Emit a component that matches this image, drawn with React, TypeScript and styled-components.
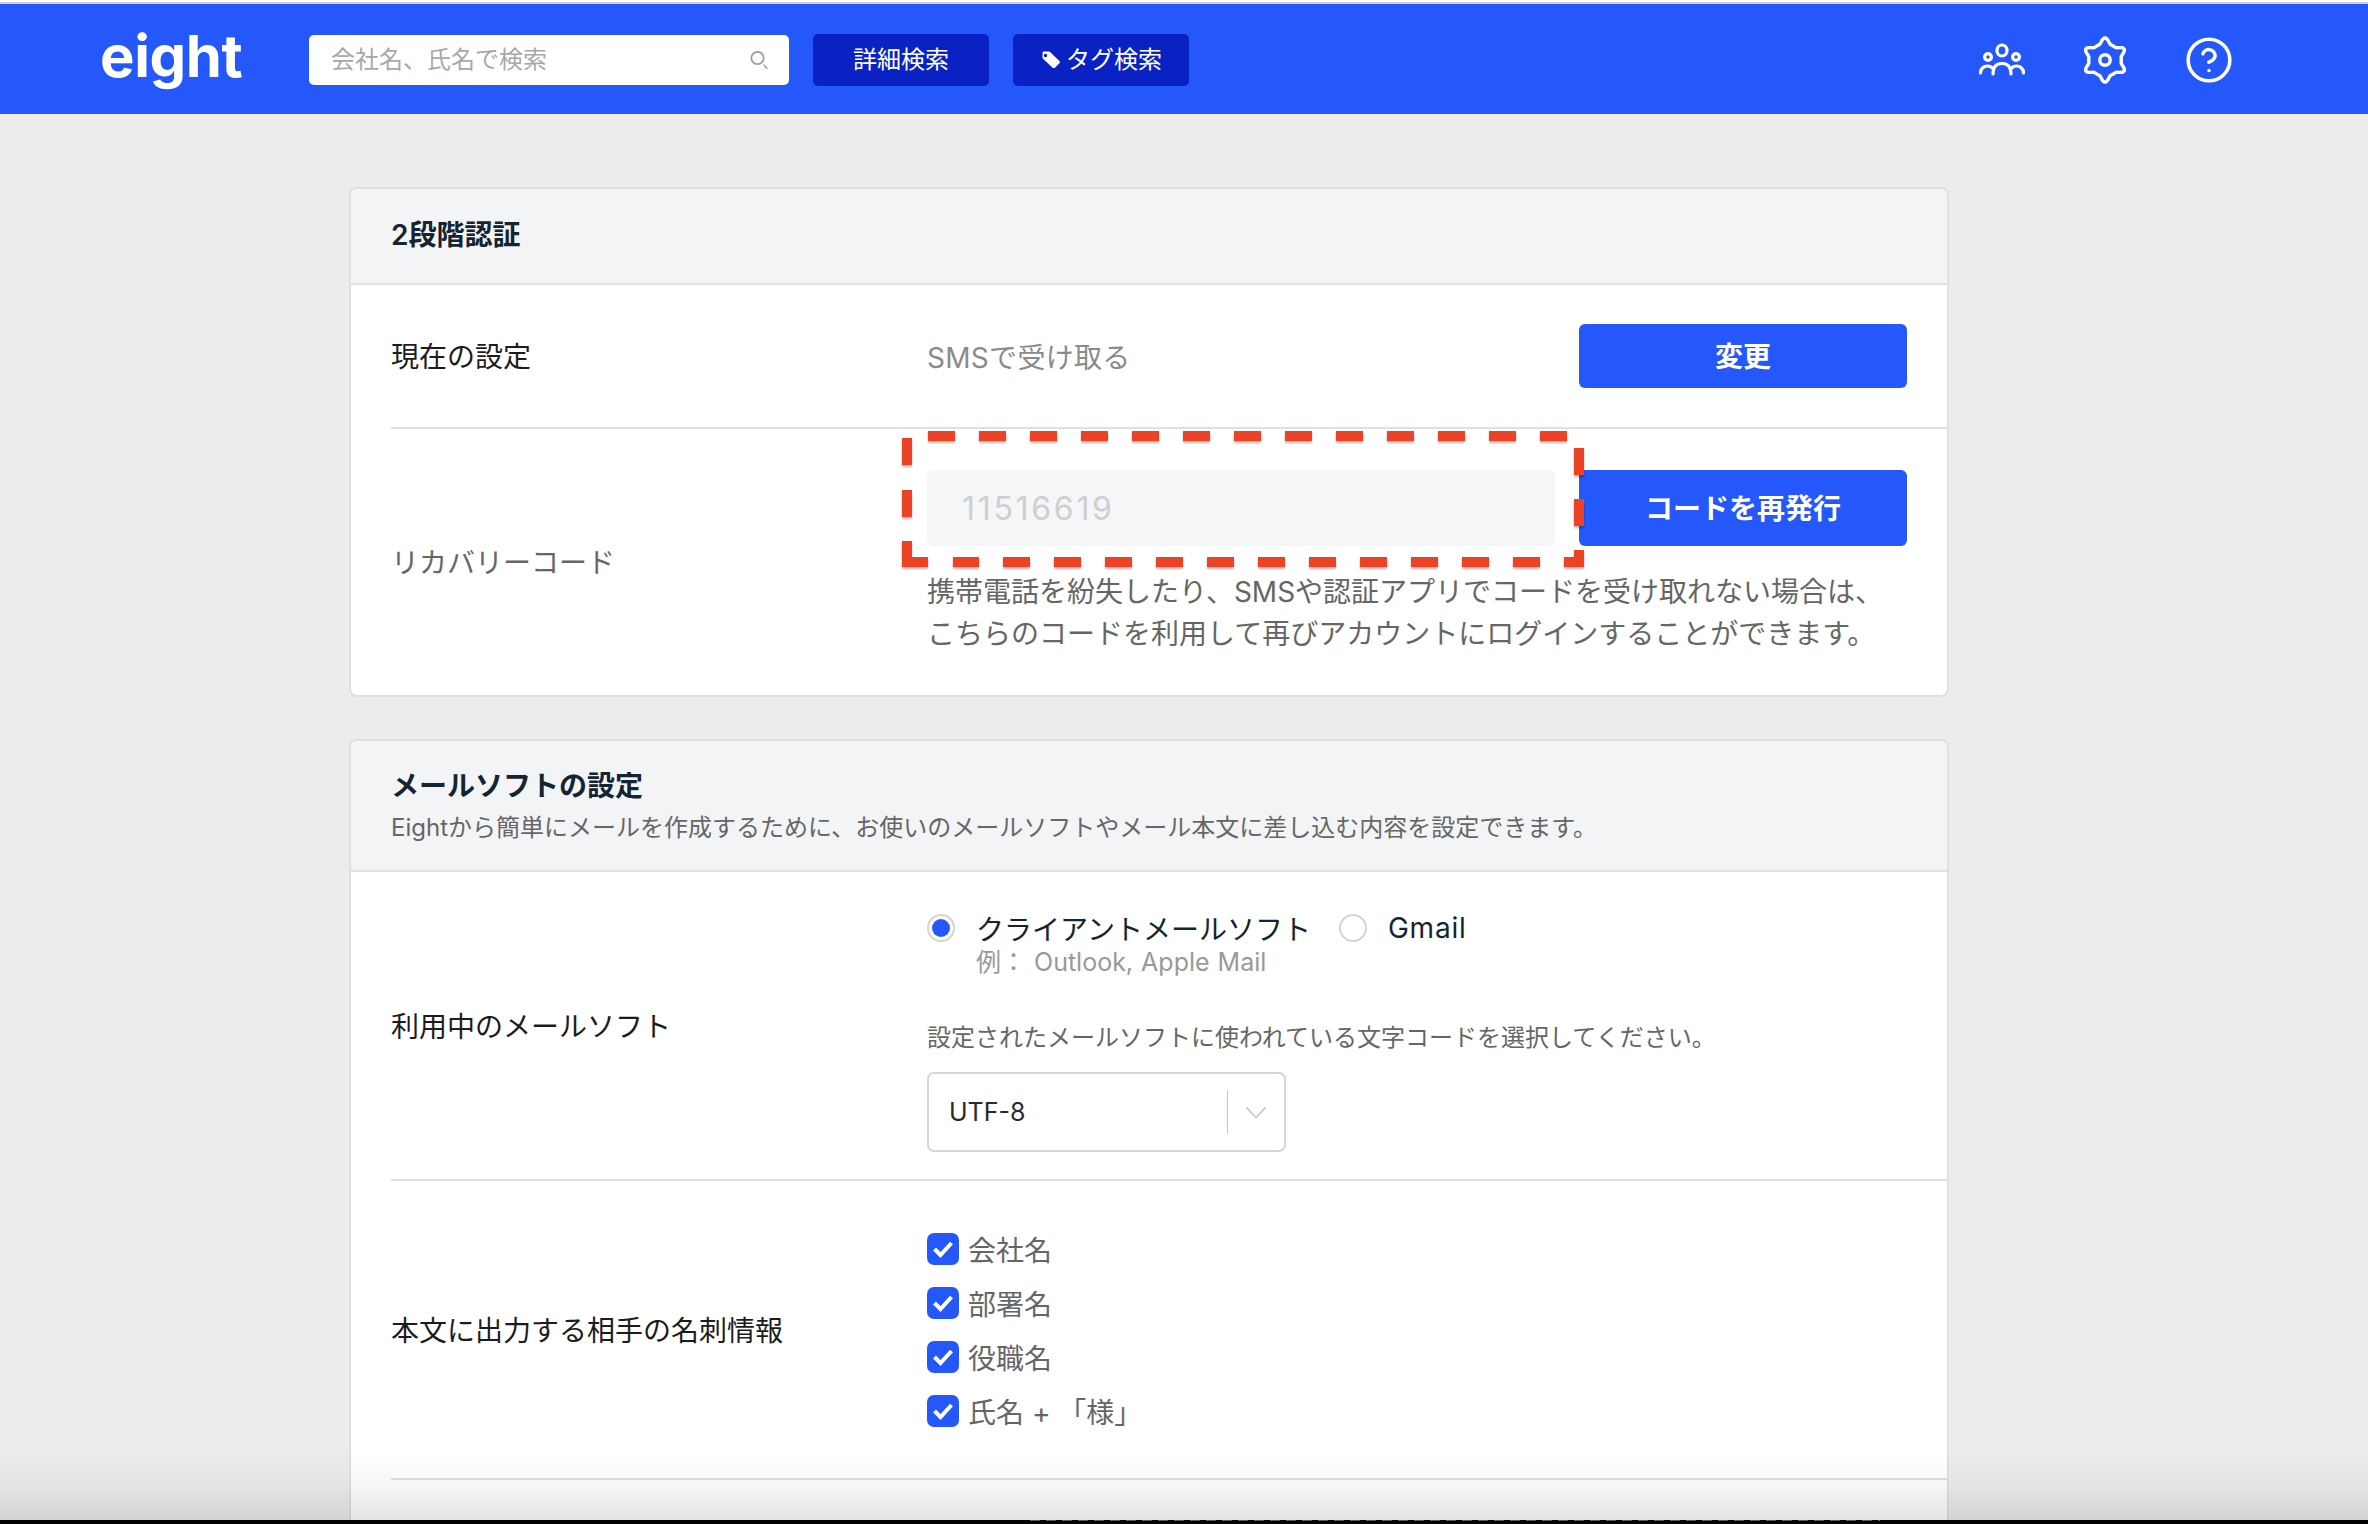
import React from 'react';
import styled, { createGlobalStyle } from 'styled-components';
import { CircleHelp } from 'lucide-react';

const blue = '#2458fa';
const navy = '#0a22c4';
const line = '#e0e0e0';
const sans = `Inter, 'Noto Sans CJK JP', sans-serif`;

const GlobalStyle = createGlobalStyle`
  html, body {
    margin: 0;
    padding: 0;
    background: #ececec;
  }
  * {
    box-sizing: border-box;
  }
`;

const Page = styled.div`
  position: relative;
  height: 1524px;
  overflow: hidden;
  background: #ececec;
  font-family: ${sans};
  border-top: 2px solid #fff;
`;

const TopBar = styled.header`
  display: flex;
  align-items: center;
  height: 112px;
  padding: 2px 134px 0 100px;
  background: ${blue};
  border-top: 2px solid #d0d0d0;
`;

const Logo = styled.div`
  width: 209px;
  font-size: 58px;
  font-weight: 700;
  line-height: 1;
  letter-spacing: -0.4px;
  color: #fff;
  margin-top: -9px;
`;

const SearchBox = styled.div`
  display: flex;
  align-items: center;
  justify-content: space-between;
  width: 480px;
  height: 50px;
  padding: 0 20px 5px 22px;
  background: #fff;
  border-radius: 5px;
  font-size: 24px;
  color: #a8a8a8;
`;

const NavButton = styled.div`
  display: flex;
  align-items: center;
  justify-content: center;
  gap: 4px;
  width: 176px;
  height: 52px;
  margin-left: 24px;
  padding-bottom: 5px;
  background: ${navy};
  border-radius: 5px;
  font-size: 24px;
  color: #fff;
`;

const NavIcons = styled.div`
  display: flex;
  align-items: center;
  gap: 55px;
  margin-left: auto;
`;

const Main = styled.main`
  display: flex;
  flex-direction: column;
  gap: 42px;
  width: 1600px;
  margin-left: 349px;
  padding-top: 73px;
`;

const Card = styled.section`
  position: relative;
  background: #fff;
  border: 2px solid ${line};
  border-radius: 8px;
`;

const CardHead = styled.div<{ $height: number }>`
  display: flex;
  flex-direction: column;
  justify-content: center;
  height: ${(p) => p.$height}px;
  padding-left: 40px;
  padding-bottom: 2px;
  background: #f3f4f6;
  border-bottom: 2px solid ${line};
  border-radius: 6px 6px 0 0;
`;

const CardTitle = styled.h2`
  margin: 0;
  font-size: 28px;
  font-weight: 600;
  line-height: 40px;
  color: #152433;
`;

const CardSub = styled.p`
  margin: 2px 0 -4px;
  font-size: 24px;
  line-height: 40px;
  color: #666;
`;

const Row = styled.div<{ $last?: boolean }>`
  display: grid;
  grid-template-columns: 536px 1fr;
  align-items: center;
  margin-left: 40px;
  padding-right: 40px;
  border-bottom: ${(p) => (p.$last ? 'none' : `2px solid ${line}`)};
`;

const RowLabel = styled.div<{ $muted?: boolean }>`
  padding-top: 2px;
  font-size: 28px;
  line-height: 40px;
  color: ${(p) => (p.$muted ? '#666' : '#1c1c1c')};
`;

const SettingValue = styled.div`
  display: flex;
  align-items: center;
  justify-content: space-between;
  height: 142px;
  font-size: 28px;
  letter-spacing: 0.3px;
  color: #8a8a8a;
`;

const PrimaryButton = styled.div<{ $height: number }>`
  display: flex;
  align-items: center;
  justify-content: center;
  flex: none;
  width: 328px;
  height: ${(p) => p.$height}px;
  padding-bottom: 2px;
  background: ${blue};
  border-radius: 6px;
  font-size: 28px;
  font-weight: 600;
  letter-spacing: 0;
  color: #fff;
`;

const RecoveryCell = styled.div`
  padding: 41px 0 40px;
`;

const CodeRow = styled.div`
  display: flex;
  gap: 24px;
`;

const CodeField = styled.div`
  display: flex;
  align-items: center;
  flex: 1;
  height: 76px;
  padding-left: 35px;
  background: #f5f6f8;
  border-radius: 6px;
  font-size: 32px;
  letter-spacing: 2.7px;
  color: #cfcfcf;
`;

const Hint = styled.p`
  margin: 25px 0 0;
  font-size: 28px;
  line-height: 42px;
  color: #666;
`;

const DashedMark = styled.svg`
  position: absolute;
  left: 0;
  top: 0;
  width: 1600px;
  height: 520px;
  overflow: visible;
  pointer-events: none;
  filter: drop-shadow(0 2px 1px rgba(0, 0, 0, 0.3));
`;

const MailCell = styled.div`
  padding: 42px 0 27px;
`;

const RadioRow = styled.div`
  display: flex;
  align-items: center;
  height: 28px;
  font-size: 28px;
  color: #152433;
`;

const Radio = styled.span<{ $on?: boolean }>`
  display: flex;
  align-items: center;
  justify-content: center;
  width: 28px;
  height: 28px;
  margin-right: 21px;
  background: #fff;
  border: 2px solid #d4d4d4;
  border-radius: 50%;
  &::after {
    content: '';
    display: ${(p) => (p.$on ? 'block' : 'none')};
    width: 18px;
    height: 18px;
    background: ${blue};
    border-radius: 50%;
  }
`;

const RadioLabel = styled.span<{ $latin?: boolean }>`
  margin-right: 28px;
  white-space: nowrap;
  letter-spacing: ${(p) => (p.$latin ? '0.8px' : '0')};
`;

const RadioNote = styled.div`
  margin: 3px 0 0 49px;
  font-size: 25px;
  line-height: 34px;
  word-spacing: 1px;
  color: #999;
`;

const Note = styled.p`
  margin: 41px 0 16px;
  font-size: 24px;
  line-height: 36px;
  color: #666;
`;

const SelectBox = styled.div`
  display: flex;
  align-items: center;
  width: 359px;
  height: 80px;
  padding-left: 20px;
  border: 2px solid #d6d6d6;
  border-radius: 7px;
  font-size: 25px;
  color: #2a2a2a;
`;

const SelectValue = styled.span`
  flex: 1;
`;

const SelectArrow = styled.span`
  display: flex;
  align-items: center;
  justify-content: center;
  width: 57px;
  height: 44px;
  border-left: 1px solid #c8c8c8;
`;

const CheckList = styled.div`
  display: flex;
  flex-direction: column;
  gap: 22px;
  padding: 52px 0 51px;
`;

const CheckItem = styled.div`
  display: flex;
  align-items: center;
  gap: 9px;
  height: 32px;
  font-size: 28px;
  color: #666;
`;

const CheckBox = styled.span`
  display: flex;
  align-items: center;
  justify-content: center;
  width: 32px;
  height: 32px;
  background: ${blue};
  border-radius: 7px;
`;

const BottomShade = styled.div`
  position: absolute;
  left: 0;
  right: 0;
  bottom: 4px;
  height: 70px;
  background: linear-gradient(to bottom, rgba(0, 0, 0, 0), rgba(0, 0, 0, 0.03) 50%, rgba(0, 0, 0, 0.11));
`;

const DockEdge = styled.div`
  position: absolute;
  left: 0;
  right: 0;
  bottom: 0;
  height: 4px;
  background: #000;
  &::after {
    content: '';
    position: absolute;
    left: 1030px;
    width: 850px;
    top: 0;
    height: 1px;
    background: repeating-linear-gradient(to right, #555 0 10px, transparent 10px 16px);
  }
`;

const SearchGlyph = () => (
  <svg width="20" height="20" viewBox="0 0 20 20" fill="none" stroke="#9a9a9a" style={{ marginTop: 5 }}>
    <circle cx="8.500" cy="8" r="6.200" strokeWidth="1.700" />
    <path d="M15 15l3 3.500" strokeWidth="1.300" strokeLinecap="round" />
  </svg>
);

const TagGlyph = () => (
  <svg width="22" height="20" viewBox="0 0 20 18" style={{ marginTop: 5 }}>
    <path
      fill="#fff"
      fillRule="evenodd"
      d="M1.500 1.200h6.200c.6 0 1.100.2 1.500.6l8.400 8c.6.6.6 1.500 0 2.100l-4 4.200c-.6.6-1.500.6-2.100 0l-8.600-8c-.4-.4-.6-.9-.6-1.400V2.600c0-.8.6-1.400 1.200-1.400zM5 3.400a1.600 1.600 0 1 0 0 3.200 1.600 1.600 0 0 0 0-3.200z"
    />
  </svg>
);

const PeopleGlyph = () => (
  <svg width="48" height="36" viewBox="0 0 48 36" fill="none" stroke="#fff" strokeWidth="3.200" strokeLinecap="round">
    <ellipse cx="24" cy="8.500" rx="5" ry="5.500" />
    <circle cx="10" cy="15" r="3.400" />
    <circle cx="38" cy="15" r="3.400" />
    <path d="M15 32c0-7 3.500-10.500 9-10.500s9 3.500 9 10.500" />
    <path d="M2.500 31c0-4 3-7 7-7 2 0 3.500.5 5 2" />
    <path d="M45.500 31c0-4-3-7-7-7-2 0-3.500.5-5 2" />
  </svg>
);

// cog outline sampled from a radial curve
const cogPath = Array.from({ length: 120 }, (_, i) => {
  const t = (i / 120) * Math.PI * 2;
  const r = 18.3 + 2.900 * Math.cos(6 * t) + 0.9 * Math.cos(12 * t);
  const x = 24 + r * Math.sin(t);
  const y = 24 - r * Math.cos(t);
  return `${i === 0 ? 'M' : 'L'}${x.toFixed(2)} ${y.toFixed(2)}`;
}).join('') + 'Z';

const CogGlyph = () => (
  <svg width="48" height="48" viewBox="0 0 48 48" fill="none" stroke="#fff" strokeWidth="3.400" strokeLinejoin="round">
    <path d={cogPath} />
    <circle cx="24" cy="24" r="5.200" />
  </svg>
);

const Tick = () => (
  <svg width="22" height="18" viewBox="0 0 22 18" fill="none" stroke="#fff" strokeWidth="4">
    <path d="M2.500 9l6 6L19.500 3" />
  </svg>
);

const Chevron = () => (
  <svg width="22" height="13" viewBox="0 0 22 13" fill="none" stroke="#c4c4c4" strokeWidth="1.600">
    <path d="M1.500 1.500L11 11.500l9.500-10" />
  </svg>
);

const fields = ['会社名', '部署名', '役職名', '氏名 + 「様」'];

export default function App() {
  return (
    <Page>
      <GlobalStyle />
      <TopBar>
        <Logo>eight</Logo>
        <SearchBox>
          会社名、氏名で検索
          <SearchGlyph />
        </SearchBox>
        <NavButton>詳細検索</NavButton>
        <NavButton>
          <TagGlyph />
          タグ検索
        </NavButton>
        <NavIcons>
          <PeopleGlyph />
          <CogGlyph />
          <CircleHelp size={50} color="#fff" strokeWidth={1.700} />
        </NavIcons>
      </TopBar>
      <Main>
        <Card>
          <CardHead $height={96}>
            <CardTitle>2段階認証</CardTitle>
          </CardHead>
          <Row>
            <RowLabel>現在の設定</RowLabel>
            <SettingValue>
              SMSで受け取る
              <PrimaryButton $height={64}>変更</PrimaryButton>
            </SettingValue>
          </Row>
          <Row $last>
            <RowLabel $muted>リカバリーコード</RowLabel>
            <RecoveryCell>
              <CodeRow>
                <CodeField>11516619</CodeField>
                <PrimaryButton $height={76}>コードを再発行</PrimaryButton>
              </CodeRow>
              <Hint>
                携帯電話を紛失したり、SMSや認証アプリでコードを受け取れない場合は、
                <br />
                こちらのコードを利用して再びアカウントにログインすることができます。
              </Hint>
            </RecoveryCell>
          </Row>
          <DashedMark viewBox="0 0 1600 520" fill="none" stroke="#ec4225" strokeWidth="10">
            <g transform="translate(-351 -189)">
              <path strokeDasharray="27 24" d="M928 436H1579V562H953" />
              <path d="M928 562H907V541M907 517V490M907 465V438" />
            </g>
          </DashedMark>
        </Card>
        <Card>
          <CardHead $height={131}>
            <CardTitle>メールソフトの設定</CardTitle>
            <CardSub>Eightから簡単にメールを作成するために、お使いのメールソフトやメール本文に差し込む内容を設定できます。</CardSub>
          </CardHead>
          <Row>
            <RowLabel>利用中のメールソフト</RowLabel>
            <MailCell>
              <RadioRow>
                <Radio $on />
                <RadioLabel>クライアントメールソフト</RadioLabel>
                <Radio />
                <RadioLabel $latin>Gmail</RadioLabel>
              </RadioRow>
              <RadioNote>例： Outlook, Apple Mail</RadioNote>
              <Note>設定されたメールソフトに使われている文字コードを選択してください。</Note>
              <SelectBox>
                <SelectValue>UTF-8</SelectValue>
                <SelectArrow>
                  <Chevron />
                </SelectArrow>
              </SelectBox>
            </MailCell>
          </Row>
          <Row>
            <RowLabel>本文に出力する相手の名刺情報</RowLabel>
            <CheckList>
              {fields.map((f) => (
                <CheckItem key={f}>
                  <CheckBox>
                    <Tick />
                  </CheckBox>
                  {f}
                </CheckItem>
              ))}
            </CheckList>
          </Row>
          <Row $last>
            <RowLabel />
            <MailCell />
          </Row>
        </Card>
      </Main>
      <BottomShade />
      <DockEdge />
    </Page>
  );
}
